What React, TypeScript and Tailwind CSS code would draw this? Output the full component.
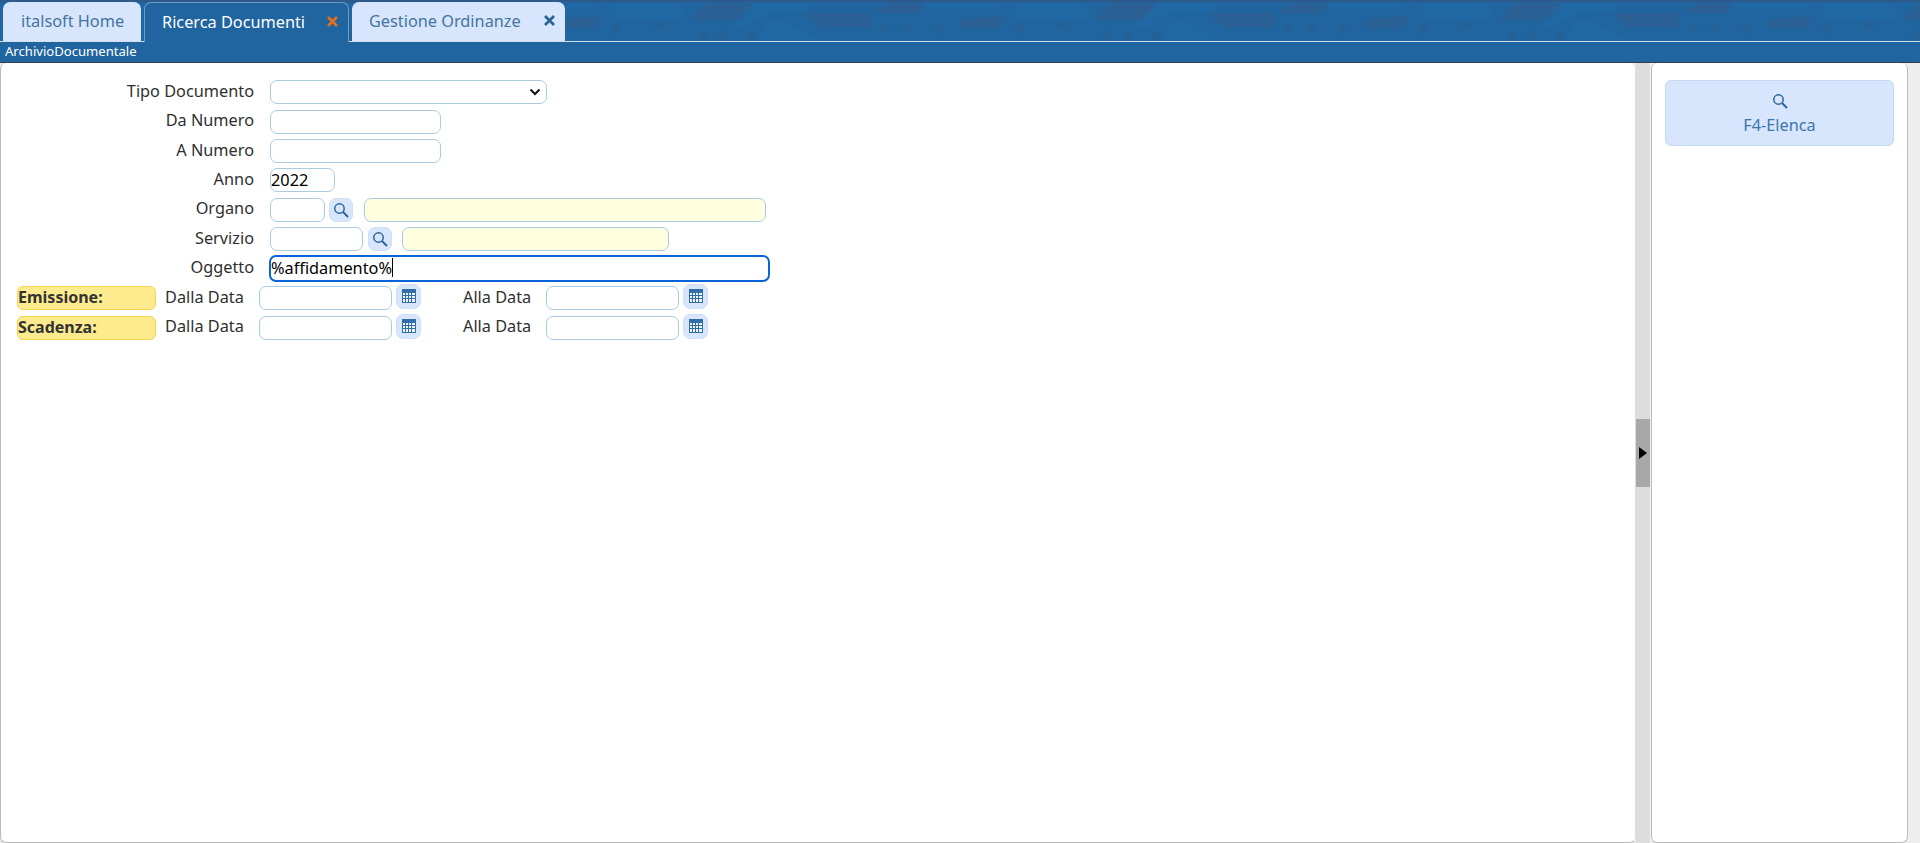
import React from "react";

function SearchIcon({ size = 16 }: { size?: number }) {
  return (
    <svg width={size} height={size} viewBox="0 0 16 16" fill="none" stroke="#2a6496">
      <circle cx="6.500" cy="6.500" r="4.700" strokeWidth="1.500" />
      <path d="M10 10l5 5" strokeWidth="2" />
    </svg>
  );
}

function CalendarIcon() {
  return (
    <svg width="14" height="14" viewBox="0 0 14 14" fill="none" stroke="#2f6ea6" strokeWidth="1">
      <rect x="0.5" y="0.5" width="13" height="13" fill="#f0f5fd" />
      <rect x="0.5" y="0.5" width="13" height="3" fill="#2f6ea6" />
      <path d="M0 6.500h14M0 9.500h14M3.500 4v10M6.500 4v10M9.500 4v10" />
    </svg>
  );
}

function CloseIcon({ color }: { color: string }) {
  return (
    <svg width="11" height="11" viewBox="0 0 11 11" stroke={color} strokeWidth="2.800">
      <path d="M1 1l9 9M10 1l-9 9" />
    </svg>
  );
}

function HeaderTexture() {
  return (
    <svg className="absolute inset-0 w-full h-[41px]" aria-hidden="true">
      <defs>
        <pattern id="skyline" width="404" height="41" patternUnits="userSpaceOnUse" patternTransform="translate(196 0)">
          <rect x="10" y="3" width="73" height="17" fill="#2068a4" />
          <path d="M153 3h60l-5 10h-40l-25 15h-13z" fill="#2068a4" />
          <path d="M168 20h12l40 20h-60z" fill="#2068a4" />
          <path d="M90 20l17-17h46l-15 17z" fill="#2a6094" />
          <path d="M203 13l17 14h50V13z" fill="#2a6094" />
          <path d="M277 10l16-7h31l-4 10h-43z" fill="#2a6094" />
          <path d="M360 20v8h40l3-12z" fill="#2a6094" />
          <path d="M323 3h80v6h-80z" fill="#2068a4" />
          <g fill="#2a5a8c" opacity="0.4">
            <circle cx="15" cy="29" r="5" />
            <circle cx="58" cy="24" r="5" />
            <circle cx="103" cy="36" r="5" />
            <circle cx="123" cy="36" r="5" />
            <circle cx="152" cy="36" r="5" />
            <circle cx="285" cy="28" r="4" />
            <circle cx="307" cy="28" r="4" />
            <circle cx="338" cy="29" r="5" />
          </g>
        </pattern>
      </defs>
      <rect width="100%" height="41" fill="url(#skyline)" />
      <rect width="100%" height="2" fill="#2d5a8a" />
    </svg>
  );
}

const fieldClass =
  "h-6 rounded-[7px] border border-[#a9cce3] px-0 text-[16.3px] text-black outline-none";

function Field({ className = "bg-white", value = "" }: { className?: string; value?: string }) {
  return <input readOnly value={value} className={`${fieldClass} ${className}`} />;
}

function IconButton({ children, className = "" }: { children: React.ReactNode; className?: string }) {
  return (
    <button className={`flex items-center justify-center rounded-[7px] border border-[#cfe0f5] bg-[#d8e6fd] ${className}`}>
      {children}
    </button>
  );
}

function Row({
  label,
  height = "h-[29.5px]",
  children,
}: {
  label: string;
  height?: string;
  children: React.ReactNode;
}) {
  return (
    <div className={`flex items-center ${height}`}>
      <label className="w-[253px] pb-0.5 text-right">{label}</label>
      <div className="ml-4 flex items-center">{children}</div>
    </div>
  );
}

function DateRow({ label, height }: { label: string; height: string }) {
  return (
    <div className={`flex items-center ${height}`}>
      <div className="ml-4 flex h-6 w-[139px] items-center rounded-[6px] border border-[#f7d44f] bg-[#fdeb8d] pb-px text-[16px] font-bold text-[#333333]">
        {label}
      </div>
      <span className="ml-[9px] w-[94px] pb-0.5">Dalla Data</span>
      <Field className="w-[133px] bg-white" />
      <IconButton className="mb-[3px] ml-1 h-[25px] w-[25px]">
        <CalendarIcon />
      </IconButton>
      <span className="ml-[42px] w-[83px] pb-0.5">Alla Data</span>
      <Field className="w-[133px] bg-white" />
      <IconButton className="mb-[3px] ml-1 h-[25px] w-[25px]">
        <CalendarIcon />
      </IconButton>
    </div>
  );
}

export default function App() {
  return (
    <div className="flex h-screen flex-col overflow-hidden bg-[#eeeeee] font-['Noto_Sans',sans-serif] text-[16.3px] text-[#2f2f2f]">
      <div className="relative flex h-[42px] border-b border-[#d3dfea] bg-[#20659f] pl-[3px] pt-[2px]">
        <HeaderTexture />
        <div className="relative flex h-[39px] w-[138px] items-center rounded-t-[7px] bg-[#d8e6fd] pl-[18px] text-[#44749f]">
          italsoft Home
        </div>
        <div className="relative ml-[3px] -mb-px flex h-[40px] w-[205px] items-center rounded-t-[7px] border border-b-0 border-[#6c9cc6] bg-[#20659f] pl-[17px] text-white">
          Ricerca Documenti
          <span className="absolute left-[182px] top-[13px]">
            <CloseIcon color="#e0701f" />
          </span>
        </div>
        <div className="relative ml-[3px] flex h-[39px] w-[213px] items-center rounded-t-[7px] bg-[#d8e6fd] pl-[17px] text-[#44749f]">
          Gestione Ordinanze
          <span className="absolute left-[192px] top-[13px]">
            <CloseIcon color="#2a6496" />
          </span>
        </div>
      </div>

      <div className="flex h-[21px] items-center border-b border-[#3a3f45] bg-[#20659f] pl-[5px] text-[13.1px] text-white">
        ArchivioDocumentale
      </div>

      <div className="flex min-h-0 flex-1">
        <main className="w-[1636px] rounded-[6px] border border-t-0 border-[#bbbbbb] border-r-[#dddddd] bg-white pt-[14.25px]">
          <Row label="Tipo Documento">
            <div className={`${fieldClass} flex w-[277px] items-center justify-end bg-white pr-[5px]`}>
              <svg width="12" height="8" viewBox="0 0 12 8" fill="none" stroke="#111" strokeWidth="2">
                <path d="M1.500 1.500L6 6l4.500-4.500" />
              </svg>
            </div>
          </Row>
          <Row label="Da Numero">
            <Field className="w-[171px] bg-white" />
          </Row>
          <Row label="A Numero" height="h-[29px]">
            <Field className="w-[171px] bg-white" />
          </Row>
          <Row label="Anno">
            <Field className="w-[65px] bg-white" value="2022" />
          </Row>
          <Row label="Organo">
            <Field className="w-[55px] bg-white" />
            <IconButton className="ml-1 h-6 w-6">
              <SearchIcon size={16} />
            </IconButton>
            <Field className="ml-[11px] w-[402px] bg-[#ffffdf]" />
          </Row>
          <Row label="Servizio">
            <Field className="w-[93px] bg-white" />
            <IconButton className="ml-[5px] h-6 w-6">
              <SearchIcon size={16} />
            </IconButton>
            <Field className="ml-[10px] w-[267px] bg-[#ffffdf]" />
          </Row>
          <Row label="Oggetto" height="h-[29px]">
            <div className="-ml-px flex h-[27px] w-[501px] items-center rounded-[7px] border-2 border-[#0b63d8] bg-white pb-px text-black">
              %affidamento%
              <span className="h-[19px] w-px bg-black" />
            </div>
          </Row>
          <DateRow label="Emissione:" height="h-[30px]" />
          <DateRow label="Scadenza:" height="h-[29.5px]" />
        </main>

        <div className="flex w-[15px] flex-col justify-center border-r border-[#f2f2f2] bg-[#dddddd]">
          <div className="flex h-[68px] items-center justify-center bg-[#a8a8a8]">
            <svg width="8" height="12" viewBox="0 0 8 12" fill="#000">
              <path d="M0 0l8 6-8 6z" />
            </svg>
          </div>
        </div>

        <aside className="w-[257px] rounded-[6px] border border-t-0 border-[#bbbbbb] bg-white px-[13px] pt-[17px]">
          <button className="flex h-[66px] w-[229px] flex-col items-center justify-center gap-1 rounded-[6px] border border-[#c3d7ef] bg-[#d8e6fd] pt-1 text-[#3d76ab]">
            <SearchIcon size={16} />
            <span>F4-Elenca</span>
          </button>
        </aside>
      </div>
    </div>
  );
}
